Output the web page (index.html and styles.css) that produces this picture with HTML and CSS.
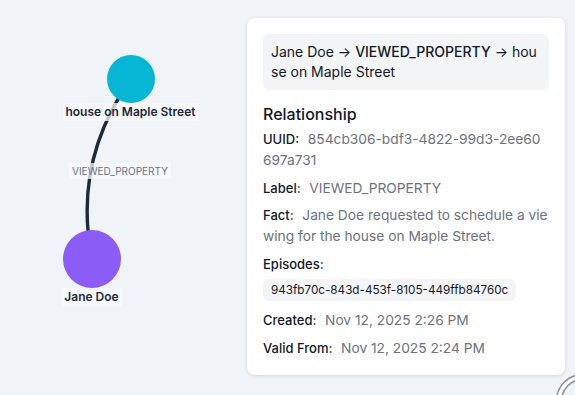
FILE: index.html
```html
<!DOCTYPE html>
<html lang="en">
<head>
  <meta charset="UTF-8" />
  <meta name="viewport" content="width=device-width, initial-scale=1.0"/>
  <title>Graph Explorer</title>
  <link rel="stylesheet" href="styles.css">
</head>
<body>

  <!-- Graph Canvas -->
  <div class="canvas">
    <svg class="edges" width="575" height="395" viewBox="0 0 575 395">
      <path d="M131 79 Q72.5 161 92 259" fill="none" stroke="#1e293b" stroke-width="3.4" stroke-linecap="round"/>
    </svg>

    <div class="node node-house"></div>
    <div class="node node-person"></div>

    <div class="node-label label-house">house on Maple Street</div>
    <div class="node-label label-person">Jane Doe</div>
    <div class="edge-label">VIEWED_PROPERTY</div>

    <!-- Details Panel -->
    <div class="panel">
      <div class="panel-title">
        Jane Doe → <strong>VIEWED_PROPERTY</strong> → house on Maple Street
      </div>

      <h3>Relationship</h3>

      <div class="field">
        <span class="field-name">UUID:</span>
        <span class="field-value">854cb306-bdf3-4822-99d3-2ee60697a731</span>
      </div>
      <div class="field">
        <span class="field-name">Label:</span>
        <span class="field-value">VIEWED_PROPERTY</span>
      </div>
      <div class="field">
        <span class="field-name">Fact:</span>
        <span class="field-value">Jane Doe requested to schedule a viewing for the house on Maple Street.</span>
      </div>
      <div class="field field-episodes">
        <span class="field-name">Episodes:</span>
      </div>
      <div class="chip">943fb70c-843d-453f-8105-449ffb84760c</div>
      <div class="field">
        <span class="field-name">Created:</span>
        <span class="field-value">Nov 12, 2025 2:26 PM</span>
      </div>
      <div class="field">
        <span class="field-name">Valid From:</span>
        <span class="field-value">Nov 12, 2025 2:24 PM</span>
      </div>
    </div>

    <!-- Corner control -->
    <svg class="corner" width="60" height="60" viewBox="0 0 60 60">
      <circle cx="38" cy="41" r="26.5" fill="#ffffff" stroke="#8b9098" stroke-width="1.6"/>
      <circle cx="38" cy="41" r="21.5" fill="#f0f3f8" stroke="#8b9098" stroke-width="1.6"/>
    </svg>
  </div>

</body>
</html>
```

FILE: styles.css
```css
:root {
  --background: #f0f3f8;
  --card-bg: #ffffff;
  --muted-bg: #f3f4f6;
  --text-main: #111827;
  --text-muted: #6b7280;
  --edge-label: #64748b;
  --node-house: #06b6d4;
  --node-person: #8b5cf6;
}

body {
  margin: 0;
  font-family: Inter, "Noto Sans", sans-serif;
  background-color: var(--background);
  color: var(--text-main);
}

.canvas {
  position: relative;
  width: 575px;
  height: 395px;
  overflow: hidden;
}

.edges {
  position: absolute;
  left: 0;
  top: 0;
}

.node {
  position: absolute;
  border-radius: 50%;
  transform: translate(-50%, -50%);
}

.node-house {
  left: 130.5px;
  top: 79px;
  width: 48px;
  height: 48px;
  background: var(--node-house);
}

.node-person {
  left: 92px;
  top: 259px;
  width: 58px;
  height: 58px;
  background: var(--node-person);
}

.node-label {
  position: absolute;
  transform: translateX(-50%);
  padding: 0 3px;
  font-size: 12px;
  font-weight: 600;
  line-height: 18px;
  white-space: nowrap;
  color: #1e293b;
  background: rgba(248, 250, 252, 0.75);
}

.label-house {
  left: 130.5px;
  top: 103px;
}

.label-person {
  left: 91.5px;
  top: 288px;
}

.edge-label {
  position: absolute;
  left: 120px;
  top: 163px;
  transform: translateX(-50%);
  padding: 0 3px;
  font-size: 10px;
  line-height: 16px;
  white-space: nowrap;
  color: var(--edge-label);
  background: rgba(248, 250, 252, 0.75);
}

.panel {
  position: absolute;
  left: 247px;
  top: 18px;
  width: 286px;
  padding: 16px;
  background: var(--card-bg);
  border-radius: 8px;
  box-shadow: 0 1px 4px rgba(0, 0, 0, 0.12);
}

.panel-title {
  padding: 8px;
  font-size: 14px;
  line-height: 20px;
  background: var(--muted-bg);
  border-radius: 6px;
  word-break: break-all;
}

.panel-title strong {
  font-weight: 500;
}

.panel h3 {
  margin: 12px 0 3px;
  font-size: 16px;
  font-weight: 500;
  line-height: 24px;
}

.field {
  font-size: 13px;
  line-height: 21px;
  margin-bottom: 6.5px;
  word-break: break-all;
}

.field:last-child {
  margin-bottom: 0;
}

.field-name {
  font-weight: 500;
  margin-right: 5px;
}

.field-value {
  font-size: 13.75px;
  color: var(--text-muted);
}

.field-episodes {
  margin-bottom: 3.5px;
}

.chip {
  display: inline-block;
  padding: 0 8px;
  margin-bottom: 9px;
  font-size: 11.7px;
  line-height: 22px;
  background: var(--muted-bg);
  border-radius: 6px;
}

.corner {
  position: absolute;
  left: 545px;
  top: 360px;
}
```
